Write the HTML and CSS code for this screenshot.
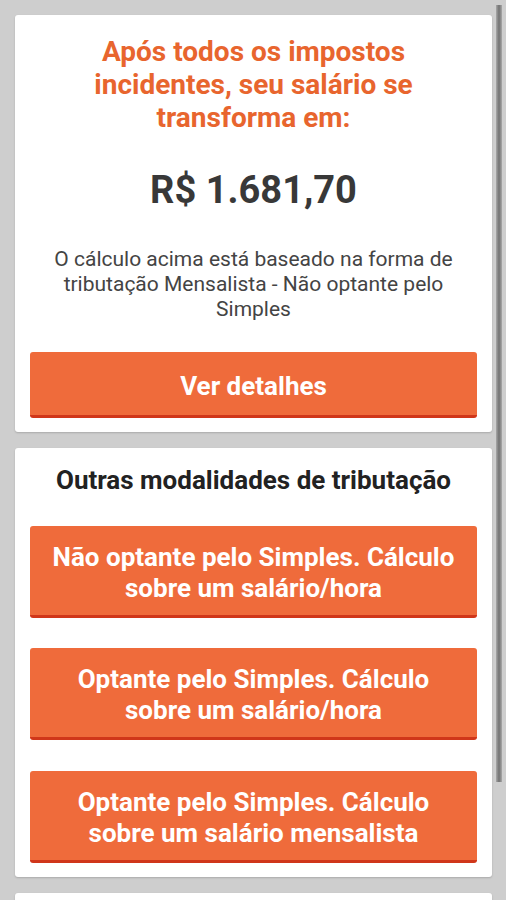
FILE: index.html
```html
<!DOCTYPE html>
<html lang="pt-BR">
<head>
  <meta charset="UTF-8">
  <meta name="viewport" content="width=device-width, initial-scale=1.0">
  <title>Salário líquido</title>
  <link rel="stylesheet" href="styles.css">
</head>
<body>
  <main class="screen">
    <section class="card result">
      <h1 class="result-title">Após todos os impostos incidentes, seu salário se transforma em:</h1>
      <p class="result-value">R$ 1.681,70</p>
      <p class="result-note">O cálculo acima está baseado na forma de tributação Mensalista - Não optante pelo Simples</p>
      <button class="btn" type="button">Ver detalhes</button>
    </section>

    <section class="card others">
      <h2 class="others-title">Outras modalidades de tributação</h2>
      <button class="btn" type="button">Não optante pelo Simples. Cálculo<br>sobre um salário/hora</button>
      <button class="btn" type="button">Optante pelo Simples. Cálculo<br>sobre um salário/hora</button>
      <button class="btn" type="button">Optante pelo Simples. Cálculo<br>sobre um salário mensalista</button>
    </section>

    <section class="card more"></section>
  </main>
  <div class="scrollbar"></div>
</body>
</html>
```

FILE: styles.css
```css
html {
  font-family: Roboto, "Liberation Sans", sans-serif;
}

body {
  background: #cecece;
  height: 900px;
  margin: 0;
  overflow: hidden;
  position: relative;
}

.screen {
  display: flex;
  flex-direction: column;
  gap: 16px;
  padding: 15px 14px 0 15px;
}

.card {
  background: #fff;
  border-radius: 3px;
  box-shadow: 0 1px 2px rgba(0, 0, 0, 0.18);
  display: flex;
  flex-direction: column;
  padding: 0 15px 14px;
  text-align: center;
}

.result-title {
  color: #e8652e;
  font-size: 28px;
  font-weight: 700;
  line-height: 33px;
  margin: 20px 20px 0;
}

.result-value {
  color: #383838;
  font-size: 38px;
  font-weight: 700;
  line-height: 45px;
  margin: 34px 0 0;
}

.result-note {
  color: #444;
  font-size: 21px;
  line-height: 25px;
  margin: 34px 0 0;
}

.result .btn {
  margin-top: 30px;
}

.btn {
  align-items: center;
  background: #ef6b3b;
  border: 0;
  border-bottom: 3px solid #d0361a;
  border-radius: 3px;
  box-sizing: border-box;
  color: #fff;
  display: flex;
  font-family: inherit;
  font-size: 26px;
  font-weight: 700;
  justify-content: center;
  line-height: 31px;
  min-height: 66px;
  padding: 16px 6px 11px;
  width: 100%;
}

.others-title {
  color: #222;
  font-size: 26px;
  font-weight: 700;
  line-height: 30px;
  margin: 17px 0 0;
}

.others .btn {
  margin-top: 30px;
}

.others .btn:first-of-type {
  margin-top: 31px;
}

.others .btn:last-of-type {
  margin-top: 31px;
}

.more {
  height: 120px;
}

.scrollbar {
  background: linear-gradient(to right, #a9a9a9, #7a7a7a 40%, #7a7a7a 60%, #a9a9a9);
  height: 777px;
  position: absolute;
  right: 4px;
  top: 5px;
  width: 6px;
}
```
